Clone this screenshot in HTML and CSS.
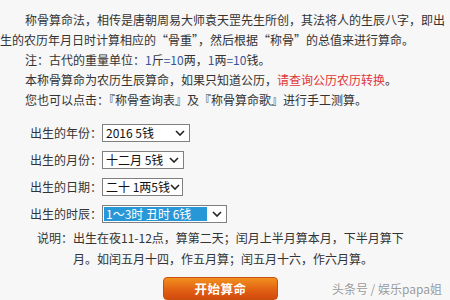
FILE: index.html
```html
<!DOCTYPE html>
<html lang="zh-CN">
<head>
<meta charset="utf-8">
<link rel="stylesheet" href="styles.css">
</head>
<body>
<div class="page">
  <div class="intro">
    <p class="lead">称骨算命法，相传是唐朝周易大师袁天罡先生所创，其法将人的生辰八字，即出<br>生的农历年月日时计算相应的“骨重”，然后根据“称骨”的总值来进行算命。</p>
    <p class="line">注：古代的重量单位：<span class="num">1</span>斤<span class="num">=10</span>两，<span class="num">1</span>两<span class="num">=10</span>钱。</p>
    <p class="line">本称骨算命为农历生辰算命，如果只知道公历，<span class="red">请查询公历农历转换</span>。</p>
    <p class="line">您也可以点击：『称骨查询表』及『称骨算命歌』进行手工测算。</p>
  </div>
  <div class="form">
    <div class="row">
      <span class="label">出生的年份：</span>
      <span class="select w-year"><span class="val">2016 5钱</span><svg class="chev" viewBox="0 0 10 6" width="10" height="6"><path d="M1 1 L5 5 L9 1" fill="none" stroke="#222" stroke-width="1.6"/></svg></span>
    </div>
    <div class="row">
      <span class="label">出生的月份：</span>
      <span class="select w-month"><span class="val">十二月 5钱</span><svg class="chev" viewBox="0 0 10 6" width="10" height="6"><path d="M1 1 L5 5 L9 1" fill="none" stroke="#222" stroke-width="1.6"/></svg></span>
    </div>
    <div class="row">
      <span class="label">出生的日期：</span>
      <span class="select w-day"><span class="val">二十 1两5钱</span><svg class="chev" viewBox="0 0 10 6" width="10" height="6"><path d="M1 1 L5 5 L9 1" fill="none" stroke="#222" stroke-width="1.6"/></svg></span>
    </div>
    <div class="row">
      <span class="label">出生的时辰：</span>
      <span class="select w-time focus"><span class="val hl">1～3时 丑时 6钱</span><svg class="chev" viewBox="0 0 10 6" width="10" height="6"><path d="M1 1 L5 5 L9 1" fill="none" stroke="#222" stroke-width="1.6"/></svg></span>
    </div>
  </div>
  <p class="note">说明：出生在夜11-12点，算第二天；闰月上半月算本月，下半月算下<br>月。如闰五月十四，作五月算；闰五月十六，作六月算。</p>
  <div class="actions">
    <span class="btn">开始算命</span>
  </div>
  <div class="watermark">头条号 / 娱乐papa姐</div>
</div>
</body>
</html>
```

FILE: styles.css
```css
html, body {
  margin: 0;
  padding: 0;
  background: #f7f7f7;
}
body {
  font-family: "Noto Sans CJK SC", "Noto Sans", sans-serif;
  font-size: 12px;
  color: #333;
}
.page {
  position: relative;
  width: 450px;
  height: 300px;
  overflow: hidden;
}
.intro {
  padding-top: 10px;
}
.intro p {
  margin: 0;
  line-height: 20px;
  white-space: nowrap;
}
.lead {
  text-indent: 25px;
}
.line {
  padding-left: 25px;
}
.num {
  color: #34559a;
}
.red {
  color: #e0353a;
}
.form {
  display: flex;
  flex-direction: column;
  gap: 9px;
  margin-top: 14px;
  padding-left: 30px;
}
.row {
  display: flex;
  align-items: center;
  height: 18px;
}
.label {
  width: 72px;
  line-height: 18px;
  color: #333;
}
.select {
  display: flex;
  align-items: center;
  justify-content: space-between;
  box-sizing: border-box;
  height: 18px;
  border: 1px solid #7f7f7f;
  background: #fff;
  color: #111;
  padding: 0 4px 0 3px;
}
.w-year { width: 88px; }
.w-month { width: 82px; }
.w-day { width: 81px; }
.w-time { width: 125px; padding: 1px 4px 1px 1px; }
.val {
  line-height: 16px;
  white-space: nowrap;
}
.hl {
  background: #2797d8;
  color: #fff;
  flex: 1;
  height: 14px;
  line-height: 14px;
  padding-left: 2px;
  margin-right: 5px;
}
.chev {
  flex: none;
}
.note {
  margin: 4px 0 0 0;
  padding-left: 73px;
  text-indent: -36px;
  line-height: 21px;
}
.actions {
  display: flex;
  margin-top: 8px;
  padding-left: 163px;
}
.btn {
  display: flex;
  align-items: center;
  justify-content: center;
  width: 115px;
  height: 23px;
  border-radius: 4px;
  background: linear-gradient(#f2901e, #e26214 55%, #d24a0e);
  border: 1px solid #c8500e;
  box-sizing: border-box;
  color: #fff;
  font-weight: bold;
  font-size: 12.5px;
  letter-spacing: 0.5px;
}
.watermark {
  position: absolute;
  right: 8px;
  bottom: 3px;
  color: #9a9a9a;
  font-size: 12px;
  text-shadow: 0 0 2px #fff;
}
```
